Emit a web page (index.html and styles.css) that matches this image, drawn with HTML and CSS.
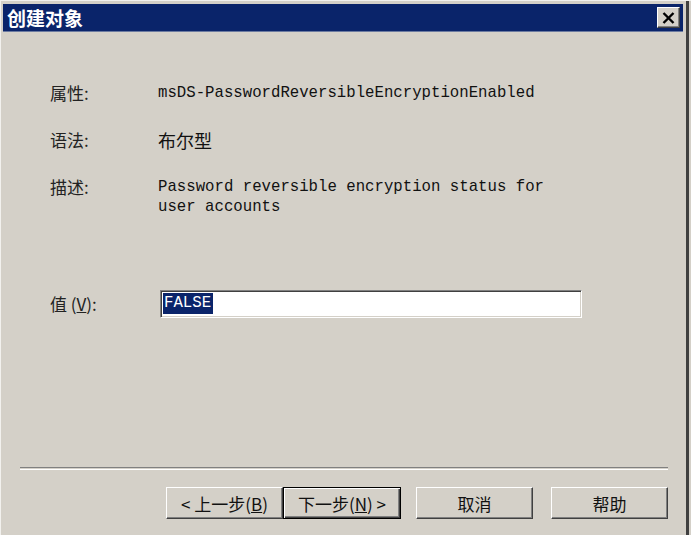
FILE: index.html
```html
<!DOCTYPE html>
<html lang="zh-CN">
<head>
<meta charset="utf-8">
<title>创建对象</title>
<link rel="stylesheet" href="styles.css">
</head>
<body>
<div class="window">
  <div class="titlebar">
    <span class="title">创建对象</span>
    <button class="close" aria-label="关闭">
      <svg width="13" height="12" viewBox="0 0 13 12"><path d="M1.5 1 L11.5 11 M11.5 1 L1.5 11" stroke="#000" stroke-width="2.4" fill="none"/></svg>
    </button>
  </div>
  <div class="content">
    <div class="info">
      <div class="label">属性:</div>
      <div class="mono">msDS-PasswordReversibleEncryptionEnabled</div>
      <div class="label">语法:</div>
      <div class="cjk-value">布尔型</div>
      <div class="label">描述:</div>
      <div class="mono">Password reversible encryption status for<br>user accounts</div>
    </div>
    <div class="value-row">
      <div class="label value-label">值 (<u>V</u>):</div>
      <div class="input"><span class="sel">FALSE</span></div>
    </div>
  </div>
  <div class="footer">
    <div class="separator"></div>
    <div class="buttons">
      <button class="btn">&lt; 上一步(<u>B</u>)</button>
      <button class="btn default">下一步(<u>N</u>) &gt;</button>
      <button class="btn gap-l">取消</button>
      <button class="btn gap-xl">帮助</button>
    </div>
  </div>
</div>
</body>
</html>
```

FILE: styles.css
```css
html, body {
  margin: 0;
  padding: 0;
  background: #d4d0c8;
}

body {
  font-family: "Noto Sans CJK SC", "Liberation Sans", sans-serif;
  color: #000;
}

.window {
  width: 691px;
  height: 535px;
  box-sizing: border-box;
  display: flex;
  flex-direction: column;
  background: #d4d0c8;
  border-top: 1px solid #f2f1ee;
  border-left: 1px solid #f2f1ee;
  padding: 3px 8px 0 2px;
  box-shadow: inset -2px 0 #d4d0c8, inset -5px 0 #404040;
}

.titlebar {
  height: 28px;
  background: #0a246a;
  display: flex;
  align-items: center;
  justify-content: space-between;
  padding: 0 3px 0 4px;
  border-bottom: 1px solid #6b7aa0;
  box-sizing: border-box;
}

.title {
  color: #fff;
  font-weight: bold;
  font-size: 19px;
  line-height: 27px;
}

.close {
  width: 23px;
  height: 21px;
  padding: 0;
  margin: 0;
  background: #d4d0c8;
  border: 1px solid;
  border-color: #fff #404040 #404040 #fff;
  box-shadow: inset -1px -1px #808080;
  display: flex;
  align-items: center;
  justify-content: center;
}

.content {
  padding-left: 47px;
}

.info {
  display: grid;
  grid-template-columns: 108px 1fr;
  row-gap: 27px;
  margin-top: 51px;
}

.label {
  font-size: 17px;
  line-height: 20px;
  color: #222;
}

.mono {
  font-family: "Liberation Mono", monospace;
  font-size: 15.7px;
  line-height: 20px;
  color: #111;
}

.cjk-value {
  font-size: 18px;
  line-height: 20px;
  color: #111;
}

.value-row {
  display: flex;
  align-items: center;
  margin-top: 73px;
}

.value-label {
  width: 110px;
}

.input {
  width: 422px;
  height: 28px;
  box-sizing: border-box;
  background: #fff;
  border: 1px solid;
  border-color: #808080 #fff #fff #808080;
  box-shadow: inset 1px 1px #404040, inset -1px -1px #d4d0c8;
  padding: 2px 0 0 2px;
  display: flex;
  align-items: flex-start;
}

.sel {
  background: #0a246a;
  color: #fff;
  font-family: "Liberation Mono", monospace;
  font-size: 15.7px;
  line-height: 21px;
  height: 21px;
  padding: 0 2px 0 1px;
}

.footer {
  margin-top: auto;
  padding-bottom: 16px;
}

.separator {
  margin: 0 15px 0 17px;
  height: 1px;
  border-top: 1px solid #808080;
  border-bottom: 1px solid #fff;
}

.buttons {
  display: flex;
  justify-content: flex-end;
  padding-right: 15px;
  margin-top: 17px;
}

.btn {
  width: 117px;
  height: 32px;
  box-sizing: border-box;
  margin: 0;
  padding: 0;
  background: #d4d0c8;
  font-family: "Noto Sans CJK SC", "Liberation Sans", sans-serif;
  font-size: 17px;
  color: #111;
  border: 1px solid;
  border-color: #fff #404040 #404040 #fff;
  box-shadow: inset -1px -1px #808080;
  white-space: nowrap;
}

.btn.default {
  width: 118px;
  border: 1px solid #000;
  box-shadow: inset 1px 1px #fff, inset -1px -1px #404040, inset -2px -2px #808080;
}

.gap-l {
  margin-left: 15px;
}

.gap-xl {
  margin-left: 18px;
}
```
